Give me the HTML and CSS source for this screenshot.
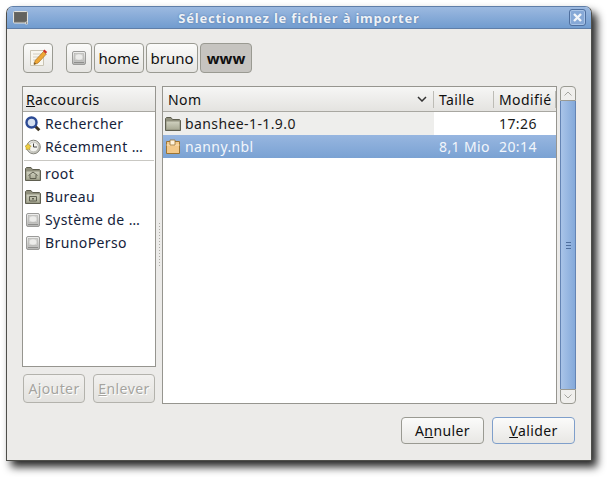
FILE: index.html
```html
<!DOCTYPE html>
<html lang="fr">
<head>
    <meta charset="UTF-8">
    <title>Sélectionnez le fichier à importer</title>
    <link rel="stylesheet" href="styles.css">
</head>
<body>
    <svg class="defs" width="0" height="0">
        <defs>
            <linearGradient id="folder-fill" x1="0" y1="0" x2="0" y2="1">
                <stop offset="0" stop-color="#cfd0bf"/>
                <stop offset="1" stop-color="#a9aa94"/>
            </linearGradient>
            <linearGradient id="drive-fill" x1="0" y1="0" x2="0" y2="1">
                <stop offset="0" stop-color="#f1f1f0"/>
                <stop offset="1" stop-color="#b4b4b2"/>
            </linearGradient>
            <linearGradient id="clock-fill" x1="0" y1="0" x2="1" y2="1">
                <stop offset="0" stop-color="#f4f4f0"/>
                <stop offset="1" stop-color="#b5b5ad"/>
            </linearGradient>
        </defs>
        <symbol id="folder" viewBox="0 0 16 16">
            <path d="M.5 14.500V2.500l1-1h4.500l1.500 2h7l1 1v10z" fill="#8f8f7c" stroke="#5f5f50"/>
            <path d="M1.500 5.500h13v8h-13z" fill="url(#folder-fill)"/>
        </symbol>
        <symbol id="drive" viewBox="0 0 16 16">
            <rect x="1.500" y="1.500" width="13" height="13" rx="1.500" fill="url(#drive-fill)" stroke="#9b9b99"/>
            <rect x="3.500" y="3.500" width="9" height="7" fill="#cfcfcd" stroke="#b2b2b0" stroke-width=".6"/>
            <ellipse cx="8" cy="7" rx="3.500" ry="2.700" fill="#ececea"/>
            <path d="M3 12.500h10" stroke="#8e8e8c"/>
        </symbol>
    </svg>
    <div class="window">
        <div class="titlebar">
            <svg class="win-icon" width="16" height="16" viewBox="0 0 16 16">
                <rect x=".5" y="1.500" width="14" height="11.500" rx="1" fill="#6b6b67" stroke="#e3e3de"/>
                <rect x="2" y="3" width="11" height="8" fill="#63635f"/>
                <circle cx="13.500" cy="13" r="1.600" fill="#e3e3de"/>
                <circle cx="13.500" cy="13" r=".8" fill="#666"/>
            </svg>
            <span class="title">Sélectionnez le fichier à importer</span>
            <span class="close">
                <svg width="11" height="11" viewBox="0 0 11 11"><path d="M2 2l7 7M9 2l-7 7" stroke="#f2f5f9" stroke-width="2.400"/></svg>
            </span>
        </div>
        <div class="content">
            <div class="pathbar">
                <button class="btn edit-btn">
                    <svg width="20" height="20" viewBox="0 0 20 20">
                        <path d="M2.500 2.500h13v15h-13z" fill="#f8f6ef" stroke="#c9c4b4"/>
                        <path d="M5 6h8M5 9h6M5 12h4M5 15h3" stroke="#d2cec0"/>
                        <path d="M6 16.500l1.200-4 8.300-9 2.800 2.600-8.300 9z" fill="#efa735" stroke="#a9701c" stroke-width=".7"/>
                        <path d="M6 16.500l.6-2 1.400 1.300z" fill="#5a4a30"/>
                        <path d="M15 3l1.400-1.500 2.800 2.600-1.400 1.500z" fill="#cf2f2a"/>
                    </svg>
                </button>
                <div class="crumbs">
                    <button class="btn crumb-icon"><svg width="16" height="16"><use href="#drive"/></svg></button>
                    <button class="btn crumb">home</button>
                    <button class="btn crumb">bruno</button>
                    <button class="btn crumb active">www</button>
                </div>
            </div>
            <div class="main">
                <div class="side">
                    <div class="list side-list">
                        <div class="head side-head"><span><u>R</u>accourcis</span></div>
                        <div class="row">
                            <svg width="16" height="16" viewBox="0 0 16 16">
                                <path d="M10 10l4.300 4.300" stroke="#3d3220" stroke-width="3"/>
                                <circle cx="6.500" cy="6.500" r="5" fill="#d5e0f0" stroke="#2c4a94" stroke-width="2.400"/>
                            </svg>
                            <span>Rechercher</span>
                        </div>
                        <div class="row">
                            <svg width="16" height="16" viewBox="0 0 16 16">
                                <circle cx="8.500" cy="8" r="6.800" fill="url(#clock-fill)" stroke="#85857d"/>
                                <circle cx="8.500" cy="8" r="4.800" fill="#f3f3ef" stroke="#b0b0a8" stroke-width=".6"/>
                                <path d="M8.500 4.500v3.500H12" stroke="#444" fill="none"/>
                                <path d="M0 7l1.800-.6L3 4.500l1.200 1.800 2 .7-1.300 1.600v2L3 10.100l-2 .6.100-2z" fill="#efcd3e" stroke="#a98f1e" stroke-width=".5"/>
                            </svg>
                            <span>Récemment …</span>
                        </div>
                        <div class="sep"></div>
                        <div class="row">
                            <svg width="16" height="16" viewBox="0 0 16 16">
                                <use href="#folder" width="16" height="16"/>
                                <path d="M3.500 9.500L8 6l4.500 3.500M5 9v3.500h6V9" fill="none" stroke="#5f5f50"/>
                            </svg>
                            <span>root</span>
                        </div>
                        <div class="row">
                            <svg width="16" height="16" viewBox="0 0 16 16">
                                <use href="#folder" width="16" height="16"/>
                                <path d="M4.500 7.500h7v4.500h-7z" fill="none" stroke="#5f5f50"/>
                                <path d="M7 9h2v1.500H7z" fill="#5f5f50"/>
                            </svg>
                            <span>Bureau</span>
                        </div>
                        <div class="row">
                            <svg width="16" height="16"><use href="#drive"/></svg>
                            <span>Système de …</span>
                        </div>
                        <div class="row">
                            <svg width="16" height="16"><use href="#drive"/></svg>
                            <span>BrunoPerso</span>
                        </div>
                    </div>
                    <div class="side-btns">
                        <button class="btn small" disabled>Ajouter</button>
                        <button class="btn small" disabled><u>E</u>nlever</button>
                    </div>
                </div>
                <div class="grip"><span class="grip-dots"></span></div>
                <div class="files">
                    <div class="list file-list">
                        <div class="head file-head">
                            <div class="col-name">Nom
                                <svg width="10" height="6" viewBox="0 0 10 6"><path d="M1 1l4 4 4-4" stroke="#333" stroke-width="1.500" fill="none"/></svg>
                            </div>
                            <div class="col-size">Taille</div>
                            <div class="col-date">Modifié</div>
                        </div>
                        <div class="file-row">
                            <div class="col-name">
                                <svg width="16" height="16"><use href="#folder"/></svg>
                                <span>banshee-1-1.9.0</span>
                            </div>
                            <div class="col-size"></div>
                            <div class="col-date">17:26</div>
                        </div>
                        <div class="file-row selected">
                            <div class="col-name">
                                <svg width="16" height="16" viewBox="0 0 16 16">
                                    <path d="M1.500 2.500h13v12h-13z" fill="#f3c98a" stroke="#9c7433"/>
                                    <path d="M1.500 6h13" stroke="#fbe3bb"/>
                                    <path d="M5 1h5v5H5z" fill="#fff4df" stroke="#9c7433" stroke-width=".8"/>
                                </svg>
                                <span>nanny.nbl</span>
                            </div>
                            <div class="col-size">8,1 Mio</div>
                            <div class="col-date">20:14</div>
                        </div>
                    </div>
                    <div class="scrollbar">
                        <div class="arrow up">
                            <svg width="8" height="5" viewBox="0 0 8 5"><path d="M.5 4.500L4 1l3.500 3.500" stroke="#a5a5a0" fill="none"/></svg>
                        </div>
                        <div class="thumb"><span class="thumb-grip"></span></div>
                        <div class="arrow down">
                            <svg width="8" height="5" viewBox="0 0 8 5"><path d="M.5.5L4 4 7.500.5" stroke="#a5a5a0" fill="none"/></svg>
                        </div>
                    </div>
                </div>
            </div>
            <div class="actions">
                <button class="btn action">A<u>n</u>nuler</button>
                <button class="btn action default"><u>V</u>alider</button>
            </div>
        </div>
    </div>
</body>
</html>
```

FILE: styles.css
```css
html, body {
    margin: 0;
    padding: 0;
    height: 100%;
    overflow: hidden;
    background-color: #fff;
}

body {
    font-family: "Noto Sans", "DejaVu Sans", sans-serif;
    font-size: 14px;
    letter-spacing: 0.4px;
    color: #101010;
    padding: 6px 0 0 6px;
    box-sizing: border-box;
}

.defs {
    display: block;
    height: 0;
}

svg {
    flex: none;
}

.window {
    width: 586px;
    height: 455px;
    box-sizing: border-box;
    display: flex;
    flex-direction: column;
    background-color: #ecebe9;
    border: 1px solid #4e4e4a;
    border-top-color: #5f7ea8;
    border-radius: 7px 7px 0 0;
    box-shadow: 5px 6px 9px rgba(0, 0, 0, 0.85);
}

.titlebar {
    height: 22px;
    flex: none;
    box-sizing: border-box;
    display: flex;
    align-items: center;
    padding: 0 5px 0 6px;
    background: linear-gradient(#9cb9e0, #719ccf);
    border-bottom: 1px solid #5f7ea8;
    border-radius: 6px 6px 0 0;
}

.title {
    flex: 1;
    text-align: center;
    color: #eef2f7;
    font-weight: bold;
    font-size: 13px;
    letter-spacing: 0.8px;
    text-shadow: 0 0 2px #4c6f9e;
}

.close {
    width: 17px;
    height: 17px;
    box-sizing: border-box;
    display: flex;
    align-items: center;
    justify-content: center;
    border: 1px solid #4f6f9e;
    border-radius: 3px;
    background: #86a8d6;
    box-shadow: inset 0 0 0 1px #a8c3e6;
}

.content {
    flex: 1;
    min-height: 0;
    display: flex;
    flex-direction: column;
    padding: 14px 15px 16px 15px;
}

.btn {
    font: inherit;
    letter-spacing: inherit;
    color: inherit;
    padding: 0;
    border: 1px solid #9a9a92;
    border-radius: 4px;
    background: linear-gradient(#fbfbfa, #e6e5e2);
    display: flex;
    align-items: center;
    justify-content: center;
}

.pathbar {
    display: flex;
    height: 30px;
    gap: 13px;
    padding-left: 1px;
}

.edit-btn {
    width: 30px;
}

.crumbs {
    display: flex;
    gap: 2px;
}

.crumb-icon {
    width: 26px;
}

.crumb {
    width: 50px;
    font-size: 15px;
    letter-spacing: 0;
}

.crumb:nth-child(3) {
    width: 52px;
}

.crumb.active {
    width: 52px;
    font-weight: bold;
    background: #c6c4c0;
}

.main {
    flex: 1;
    min-height: 0;
    display: flex;
    margin-top: 13px;
}

.side {
    width: 134px;
    flex: none;
    display: flex;
    flex-direction: column;
}

.list {
    background-color: #fff;
    border: 1px solid #96958f;
    box-sizing: border-box;
}

.side-list {
    height: 281px;
}

.head {
    height: 25px;
    box-sizing: border-box;
    display: flex;
    align-items: center;
    background: linear-gradient(#f6f6f5, #e4e3e0);
    border-bottom: 1px solid #a8a7a1;
}

.side-head {
    padding-left: 3px;
}

.row {
    height: 23px;
    display: flex;
    align-items: center;
    gap: 4px;
    padding-left: 2px;
    color: #15233b;
}

.sep {
    height: 1px;
    margin: 2px 1px 1px;
    background-color: #c9c8c3;
}

.side-btns {
    display: flex;
    gap: 8px;
    margin-top: 7px;
    padding-left: 1px;
}

.small {
    width: 62px;
    height: 29px;
    background: linear-gradient(#f2f1ef, #e2e1de);
    border-color: #b3b2ac;
    color: #a5a49f;
    text-shadow: 1px 1px 0 #fff;
}

.grip {
    width: 6px;
    height: 318px;
    flex: none;
    display: flex;
    align-items: center;
    justify-content: center;
}

.grip-dots {
    width: 3px;
    height: 46px;
    background: radial-gradient(circle, #aeada7 0.8px, transparent 1px) 0 0 / 3px 3px;
}

.files {
    flex: 1;
    min-width: 0;
    display: flex;
    gap: 3px;
}

.file-list {
    flex: 1;
    height: 318px;
}

.file-head {
    color: #101010;
}

.file-head > div {
    height: 17px;
    display: flex;
    align-items: center;
    box-sizing: border-box;
    border-right: 1px solid #bdbcb6;
}

.col-name {
    width: 271px;
    padding-left: 5px;
    box-sizing: border-box;
}

.file-head .col-name {
    justify-content: space-between;
    padding-right: 6px;
}

.col-size {
    width: 60px;
    padding-left: 5px;
    box-sizing: border-box;
    white-space: nowrap;
}

.col-date {
    width: 62px;
    padding-left: 5px;
    box-sizing: border-box;
}

.file-row {
    height: 23px;
    display: flex;
    align-items: center;
    color: #1b1b1b;
}

.file-row .col-name {
    height: 23px;
    display: flex;
    align-items: center;
    gap: 4px;
    padding-left: 2px;
    background-color: #eeeeec;
}

.file-row.selected {
    background: linear-gradient(#97b6e0, #7aa2d3);
    color: #f2f6fb;
}

.file-row.selected .col-name {
    background: none;
}

.scrollbar {
    width: 16px;
    flex: none;
    height: 318px;
    display: flex;
    flex-direction: column;
}

.arrow {
    height: 15px;
    flex: none;
    display: flex;
    align-items: center;
    justify-content: center;
    box-sizing: border-box;
    border: 1px solid #9a9a92;
    background: #f0efed;
}

.arrow.up {
    border-radius: 4px 4px 0 0;
}

.arrow.down {
    border-radius: 0 0 4px 4px;
}

.thumb {
    flex: 1;
    display: flex;
    align-items: center;
    justify-content: center;
    background: linear-gradient(90deg, #a9c4e8, #84a9da);
    border-left: 1px solid #6484b4;
    border-right: 1px solid #6484b4;
}

.thumb-grip {
    width: 5px;
    height: 7px;
    background: repeating-linear-gradient(#4f6f9e 0 1px, transparent 1px 3px);
}

.actions {
    display: flex;
    justify-content: flex-end;
    gap: 8px;
    padding-right: 1px;
    margin-top: -15px;
}

.action {
    width: 83px;
    height: 27px;
    background: linear-gradient(#fbfbfa, #e8e7e4);
}

.action.default {
    border-color: #7f9fcb;
}
```
